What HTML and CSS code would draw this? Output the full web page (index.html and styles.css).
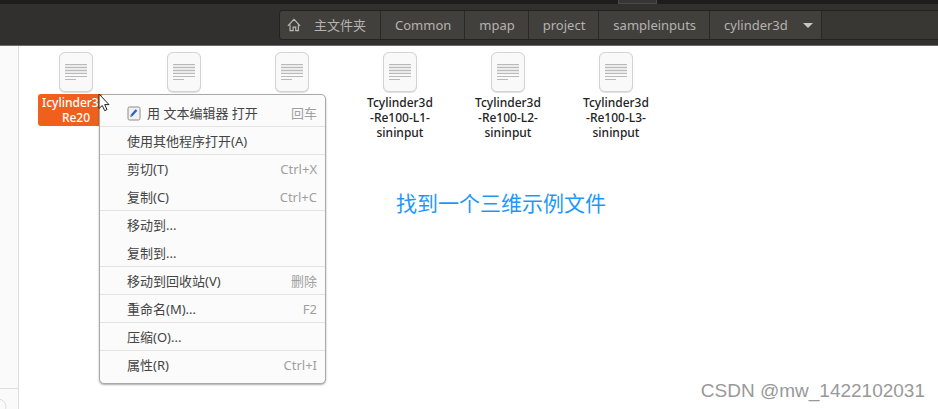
FILE: index.html
```html
<!DOCTYPE html>
<html lang="zh-CN">
<head>
<meta charset="utf-8">
<title>cylinder3d</title>
<link rel="stylesheet" href="styles.css">
</head>
<body>
<svg class="defs" aria-hidden="true">
  <symbol id="doc" viewBox="0 0 36 43">
    <rect x="1" y="1.500" width="34" height="40.500" rx="6" fill="#e0e0e0"/>
    <rect x="1.500" y="1.500" width="33" height="39" rx="5.500" fill="#f9f9f9" stroke="#d3d3d3"/>
    <path d="M7 13.500h22M7 16.500h22M7 19.500h22M7 22.500h22M7 25.500h22M7 28.500h11" stroke="#b9b9b9"/>
    <path d="M7 15h22M7 18h22M7 21h22" stroke="#dedede"/>
  </symbol>
</svg>
<div class="topbar"><span class="topbar-tab"></span></div>
<header class="header">
  <nav class="path" aria-label="路径">
    <button class="crumb home">
      <svg class="home-icon" viewBox="0 0 16 16" aria-hidden="true"><path d="M1 9l7-7.500L15 9M3.500 7.500v7h3.500v-4h3v4h3v-7" fill="none" stroke="#bdbbb7" stroke-width="1.300"/></svg>
      主文件夹
    </button>
    <button class="crumb">Common</button>
    <button class="crumb">mpap</button>
    <button class="crumb">project</button>
    <button class="crumb">sampleinputs</button>
    <button class="crumb">cylinder3d<span class="caret"></span></button>
  </nav>
</header>
<div class="window">
  <aside class="sidebar">
    <div class="sidebar-foot"><svg class="ring" viewBox="0 0 18 18" aria-hidden="true"><circle cx="-2" cy="17" r="8" fill="none" stroke="#dedede"/></svg></div>
  </aside>
  <main class="files">
    <div class="file selected"><svg class="doc"><use href="#doc"/></svg><span class="name">Icylinder3d-<br>Re20</span></div>
    <div class="file"><svg class="doc"><use href="#doc"/></svg></div>
    <div class="file"><svg class="doc"><use href="#doc"/></svg></div>
    <div class="file"><svg class="doc"><use href="#doc"/></svg><span class="name">Tcylinder3d<br>-Re100-L1-<br>sininput</span></div>
    <div class="file"><svg class="doc"><use href="#doc"/></svg><span class="name">Tcylinder3d<br>-Re100-L2-<br>sininput</span></div>
    <div class="file"><svg class="doc"><use href="#doc"/></svg><span class="name">Tcylinder3d<br>-Re100-L3-<br>sininput</span></div>
    <div class="menu" role="menu">
      <button class="item line" role="menuitem"><svg class="edit" viewBox="0 0 14 15" aria-hidden="true"><rect x="1" y="1" width="12" height="13" rx="1.500" fill="#f1f1f1" stroke="#8c8c8c"/><path d="M4.500 9.500L9.500 4" stroke="#2f5fd0" stroke-width="2.400"/><path d="M3.300 11l.5-2 1.500 1.300z" fill="#444"/></svg><span>用 文本编辑器 打开</span><kbd>回车</kbd></button>
      <button class="item line" role="menuitem"><span>使用其他程序打开(A)</span></button>
      <button class="item" role="menuitem"><span>剪切(T)</span><kbd>Ctrl+X</kbd></button>
      <button class="item line" role="menuitem"><span>复制(C)</span><kbd>Ctrl+C</kbd></button>
      <button class="item" role="menuitem"><span>移动到...</span></button>
      <button class="item line" role="menuitem"><span>复制到...</span></button>
      <button class="item line" role="menuitem"><span>移动到回收站(V)</span><kbd>删除</kbd></button>
      <button class="item line" role="menuitem"><span>重命名(M)...</span><kbd>F2</kbd></button>
      <button class="item line" role="menuitem"><span>压缩(O)...</span></button>
      <button class="item" role="menuitem"><span>属性(R)</span><kbd>Ctrl+I</kbd></button>
    </div>
    <svg class="cursor" viewBox="0 0 12 19" aria-hidden="true"><path d="M1 1v14.500l3.300-3 2.400 5.200 2.300-1.100-2.300-5h4.300z" fill="#fff" stroke="#222"/></svg>
    <p class="note">找到一个三维示例文件</p>
  </main>
  <div class="watermark">CSDN @mw_1422102031</div>
</div>
</body>
</html>
```
FILE: styles.css
```css
* { box-sizing: border-box; }
body {
  margin: 0;
  min-height: 100vh;
  display: flex;
  flex-direction: column;
  overflow: hidden;
  background: #fff;
  color: #444;
  font: 13px/15px "Noto Sans", "Noto Sans CJK SC", sans-serif;
}
button {
  margin: 0;
  border: 0;
  background: none;
  color: inherit;
  font: inherit;
}
.defs { position: absolute; width: 0; height: 0; }
.topbar {
  display: flex;
  height: 4px;
  padding-left: 618px;
  background: #1d1d1c;
}
.topbar-tab {
  width: 39px;
  height: 4px;
  background: #373635;
  border: 1px solid #4a4948;
  border-top: 0;
}
.header {
  height: 42px;
  padding: 6px 0 5px 279px;
  background: #31302e;
  border-bottom: 1px solid #6b6a69;
}
.path {
  display: flex;
  height: 30px;
  border: 1px solid #232221;
  border-right: 0;
  border-radius: 4px 0 0 4px;
  background: #383734;
}
.crumb {
  display: flex;
  align-items: center;
  padding: 0 13px 0 14px;
  border-right: 1px solid #2a2927;
  background: #41403d;
  color: #b5b3af;
  white-space: nowrap;
}
.home { padding: 0 14px 0 7px; gap: 13px; border-radius: 3px 0 0 3px; }
.home-icon { width: 14px; height: 14px; }
.caret {
  margin: 0 -5px 0 15px;
  border: 5px solid transparent;
  border-top-color: #c8c6c2;
  border-bottom: 0;
}
.window { position: relative; flex: 1; display: flex; }
.sidebar {
  width: 19px;
  display: flex;
  flex-direction: column;
  justify-content: flex-end;
  background: #fafafa;
  border-right: 1px solid #dcdcdc;
}
.sidebar-foot { height: 21px; border-top: 1px solid #dedede; }
.ring { display: block; width: 18px; height: 20px; }
.files {
  position: relative;
  flex: 1;
  display: flex;
  align-items: flex-start;
  padding: 5px 0 0 3px;
}
.file {
  width: 108px;
  display: flex;
  flex-direction: column;
  align-items: center;
}
.doc { width: 36px; height: 43px; }
.name {
  padding: 1px 4px;
  border-radius: 3px;
  color: #222;
  font-size: 12px;
  font-weight: 500;
  text-align: center;
}
.selected .name { background: #f0601c; color: #fff; }
.menu {
  position: absolute;
  left: 80px;
  top: 48px;
  width: 227px;
  padding: 4px 0;
  border: 1px solid #a9a9a9;
  border-radius: 5px;
  background: #fbfbfb;
  box-shadow: 0 1px 2px #0005;
}
.item {
  width: 100%;
  height: 28px;
  display: flex;
  align-items: center;
  padding: 2px 8px 0 27px;
  border-bottom: 1px solid transparent;
  white-space: nowrap;
}
.line { border-bottom-color: #e2e2e2; }
.edit { width: 14px; height: 15px; margin-right: 6px; }
kbd { margin-left: auto; color: #a0a0a0; font: inherit; }
.cursor { position: absolute; left: 79px; top: 47px; width: 12px; height: 19px; }
.note {
  position: absolute;
  left: 377px;
  top: 145px;
  margin: 0;
  color: #1e98f8;
  font-size: 21px;
  line-height: 24px;
  white-space: nowrap;
}
.watermark {
  position: absolute;
  right: 13px;
  bottom: 8px;
  color: #999;
  font: 19px/20px "Liberation Sans", sans-serif;
}
```
